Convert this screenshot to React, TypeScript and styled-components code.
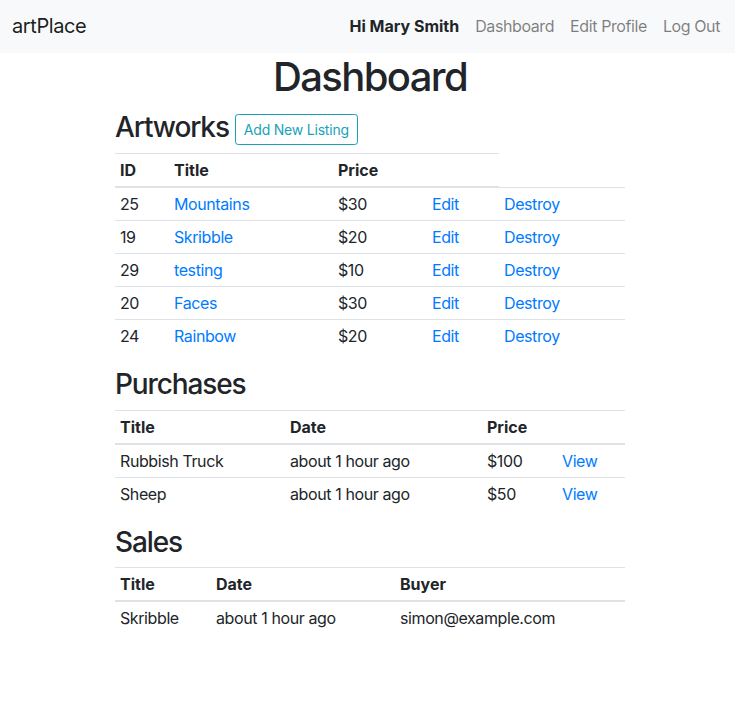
import React from 'react'
import styled, { createGlobalStyle } from 'styled-components'

const color = {
  text: '#212529',
  link: '#007bff',
  info: '#17a2b8',
  border: '#dee2e6',
  navBg: '#f8f9fa',
  navLink: 'rgba(0, 0, 0, 0.5)',
}

type Artwork = { id: number; title: string; price: string }
type Purchase = { title: string; date: string; price: string }
type Sale = { title: string; date: string; buyer: string }

const artworks: Artwork[] = [
  { id: 25, title: 'Mountains', price: '$30' },
  { id: 19, title: 'Skribble', price: '$20' },
  { id: 29, title: 'testing', price: '$10' },
  { id: 20, title: 'Faces', price: '$30' },
  { id: 24, title: 'Rainbow', price: '$20' },
]

const purchases: Purchase[] = [
  { title: 'Rubbish Truck', date: 'about 1 hour ago', price: '$100' },
  { title: 'Sheep', date: 'about 1 hour ago', price: '$50' },
]

const sales: Sale[] = [
  { title: 'Skribble', date: 'about 1 hour ago', buyer: 'simon@example.com' },
]

const GlobalStyle = createGlobalStyle`
  body {
    margin: 0;
    font-family: Inter, "Noto Sans", "Liberation Sans", sans-serif;
    font-size: 16px;
    line-height: 1.5;
    letter-spacing: -0.025em;
    color: ${color.text};
    background: #fff;
  }
`

const Columns = ({ widths }: { widths: number[] }) => (
  <colgroup>
    {widths.map((w, i) => (
      <col key={i} style={{ width: w }} />
    ))}
  </colgroup>
)

export default function App() {
  return (
    <>
      <GlobalStyle />
      <Nav_Bar>
        <A_Brand href="#">artPlace</A_Brand>
        <Ul_NavList>
          <Li_NavItem $strong>Hi Mary Smith</Li_NavItem>
          <Li_NavItem>Dashboard</Li_NavItem>
          <Li_NavItem>Edit Profile</Li_NavItem>
          <Li_NavItem>Log Out</Li_NavItem>
        </Ul_NavList>
      </Nav_Bar>

      <Main_Page>
        <H1_Title>Dashboard</H1_Title>

        <Div_SectionHead>
          <H3_Section $tall>Artworks</H3_Section>
          <Button_Outline>Add New Listing</Button_Outline>
        </Div_SectionHead>
        <Table_Data>
          <Columns widths={[54, 164, 94, 72, 126]} />
          <thead>
            <tr>
              <th>ID</th>
              <th>Title</th>
              <th>Price</th>
              <th></th>
            </tr>
          </thead>
          <tbody>
            {artworks.map((a) => (
              <tr key={a.id}>
                <td>{a.id}</td>
                <td><A_Link href="#">{a.title}</A_Link></td>
                <td>{a.price}</td>
                <td><A_Link href="#">Edit</A_Link></td>
                <td><A_Link href="#">Destroy</A_Link></td>
              </tr>
            ))}
          </tbody>
        </Table_Data>

        <H3_Section>Purchases</H3_Section>
        <Table_Data>
          <Columns widths={[170, 197, 75, 68]} />
          <thead>
            <tr>
              <th>Title</th>
              <th>Date</th>
              <th>Price</th>
              <th></th>
            </tr>
          </thead>
          <tbody>
            {purchases.map((p) => (
              <tr key={p.title}>
                <td>{p.title}</td>
                <td>{p.date}</td>
                <td>{p.price}</td>
                <td><A_Link href="#">View</A_Link></td>
              </tr>
            ))}
          </tbody>
        </Table_Data>

        <H3_Section>Sales</H3_Section>
        <Table_Data>
          <Columns widths={[96, 184, 230]} />
          <thead>
            <tr>
              <th>Title</th>
              <th>Date</th>
              <th>Buyer</th>
            </tr>
          </thead>
          <tbody>
            {sales.map((s) => (
              <tr key={s.title}>
                <td>{s.title}</td>
                <td>{s.date}</td>
                <td>{s.buyer}</td>
              </tr>
            ))}
          </tbody>
        </Table_Data>
      </Main_Page>
    </>
  )
}

const Nav_Bar = styled.nav`
  height: 53px;
  background-color: ${color.navBg};
  display: flex;
  align-items: center;
  justify-content: space-between;
  padding: 0 7px 0 12px;
`

const A_Brand = styled.a`
  font-size: 20px;
  line-height: 30px;
  margin-top: -2px;
  color: rgba(0, 0, 0, 0.9);
  text-decoration: none;
`

const Ul_NavList = styled.ul`
  display: flex;
  list-style: none;
  margin: -2px 0 0;
  padding: 0;
`

const Li_NavItem = styled.li<{ $strong?: boolean }>`
  padding: 8px;
  line-height: 24px;
  font-weight: ${(p) => (p.$strong ? 700 : 400)};
  letter-spacing: ${(p) => (p.$strong ? '0' : '-0.025em')};
  color: ${(p) => (p.$strong ? color.text : color.navLink)};
`

const Main_Page = styled.main`
  padding: 0 110px 0 115px;
`

const H1_Title = styled.h1`
  margin: 0 0 8px;
  font-size: 40px;
  line-height: 48px;
  font-weight: 500;
  letter-spacing: -0.04em;
  text-align: center;
`

const Div_SectionHead = styled.div`
  display: flex;
  align-items: flex-start;
  margin-bottom: 8px;
`

const H3_Section = styled.h3<{ $tall?: boolean }>`
  margin: 0 0 ${(p) => (p.$tall ? '0' : '8px')};
  font-size: 28px;
  line-height: ${(p) => (p.$tall ? '36px' : '33.6px')};
  font-weight: 500;
  letter-spacing: -0.04em;
`

const Button_Outline = styled.button`
  margin: 5px 0 0 6px;
  padding: 4px 8px;
  font-family: inherit;
  font-size: 14px;
  line-height: 21px;
  letter-spacing: -0.015em;
  color: ${color.info};
  background: transparent;
  border: 1px solid ${color.info};
  border-radius: 3.2px;
`

const Table_Data = styled.table`
  width: 100%;
  table-layout: fixed;
  border-collapse: collapse;
  margin-bottom: 16px;
  th,
  td {
    padding: 4px 5px;
    text-align: left;
    vertical-align: top;
    border-top: 1px solid ${color.border};
    white-space: nowrap;
  }
  th {
    font-weight: 700;
    letter-spacing: 0;
    vertical-align: bottom;
    border-bottom: 2px solid ${color.border};
  }
`

const A_Link = styled.a`
  color: ${color.link};
  text-decoration: none;
`
